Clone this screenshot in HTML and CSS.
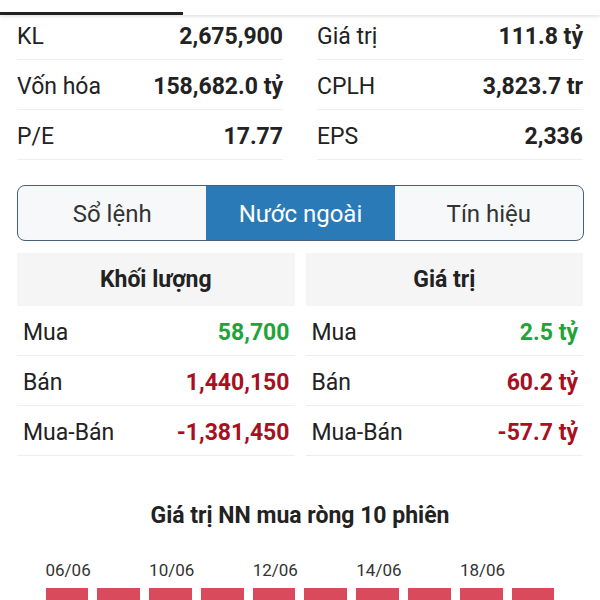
FILE: index.html
```html
<!DOCTYPE html>
<html lang="vi">
<head>
    <meta charset="UTF-8">
    <meta name="viewport" content="width=device-width, initial-scale=1.0">
    <title>Nước ngoài</title>
    <link rel="stylesheet" href="styles.css">
</head>
<body>
    <!-- Thanh tab phía trên (đang cuộn) -->
    <div class="topbar"><span class="indicator"></span></div>

    <!-- Thông số cơ bản -->
    <div class="stats">
        <div class="stat"><span>KL</span><b>2,675,900</b></div>
        <div class="stat"><span>Giá trị</span><b>111.8 tỷ</b></div>
        <div class="stat"><span>Vốn hóa</span><b>158,682.0 tỷ</b></div>
        <div class="stat"><span>CPLH</span><b>3,823.7 tr</b></div>
        <div class="stat"><span>P/E</span><b>17.77</b></div>
        <div class="stat"><span>EPS</span><b>2,336</b></div>
    </div>

    <div class="tabs">
        <div class="tab">Sổ lệnh</div>
        <div class="tab active">Nước ngoài</div>
        <div class="tab">Tín hiệu</div>
    </div>

    <!-- Giao dịch khối ngoại -->
    <div class="foreign">
        <div class="panel">
            <div class="panel-head">Khối lượng</div>
            <div class="panel-row"><span>Mua</span><b class="up">58,700</b></div>
            <div class="panel-row"><span>Bán</span><b class="down">1,440,150</b></div>
            <div class="panel-row"><span>Mua-Bán</span><b class="down">-1,381,450</b></div>
        </div>
        <div class="panel">
            <div class="panel-head">Giá trị</div>
            <div class="panel-row"><span>Mua</span><b class="up">2.5 tỷ</b></div>
            <div class="panel-row"><span>Bán</span><b class="down">60.2 tỷ</b></div>
            <div class="panel-row"><span>Mua-Bán</span><b class="down">-57.7 tỷ</b></div>
        </div>
    </div>

    <h2 class="chart-title">Giá trị NN mua ròng 10 phiên</h2>

    <div class="chart">
        <div class="chart-labels">
            <span>06/06</span><span></span>
            <span>10/06</span><span></span>
            <span>12/06</span><span></span>
            <span>14/06</span><span></span>
            <span>18/06</span><span></span>
        </div>
        <div class="chart-bars">
            <div class="bar"></div><div class="bar"></div>
            <div class="bar"></div><div class="bar"></div>
            <div class="bar"></div><div class="bar"></div>
            <div class="bar"></div><div class="bar"></div>
            <div class="bar"></div><div class="bar"></div>
        </div>
    </div>
</body>
</html>
```

FILE: styles.css
```css
body {
    margin: 0;
    background: #ffffff;
    color: #222222;
    font-family: Roboto, "Noto Sans", sans-serif;
    font-size: 23px;
    overflow: hidden;
}

.topbar {
    position: absolute;
    top: 0;
    left: 0;
    right: 0;
    height: 15px;
    background: #ffffff;
    box-shadow: 0 2px 3px rgba(0, 0, 0, 0.1);
    z-index: 2;
}

.indicator {
    position: absolute;
    left: 0;
    bottom: 0;
    width: 183px;
    height: 3px;
    background: #222222;
}

.stats {
    display: grid;
    grid-template-columns: 1fr 1fr;
    column-gap: 34px;
    padding: 10px 17px 0;
}

.stat {
    display: flex;
    justify-content: space-between;
    align-items: center;
    height: 50px;
    padding-top: 3px;
    box-sizing: border-box;
    border-bottom: 1px solid #eeeeee;
}

.stat b, .panel-row b {
    font-weight: 700;
}

.tabs {
    display: grid;
    grid-template-columns: 1fr 1fr 1fr;
    margin: 25px 16px 0 17px;
    height: 56px;
    box-sizing: border-box;
    border: 1px solid #45607a;
    border-radius: 8px;
    overflow: hidden;
    background: #f6f8f9;
}

.tab {
    display: flex;
    justify-content: center;
    align-items: center;
    padding-top: 2px;
    color: #333333;
    font-size: 24px;
}

.tab.active {
    background: #2a7ab7;
    color: #ffffff;
}

.foreign {
    display: grid;
    grid-template-columns: 1fr 1fr;
    column-gap: 11px;
    margin: 12px 17px 0;
}

.panel-head {
    height: 53px;
    display: flex;
    justify-content: center;
    align-items: center;
    background: #f5f5f5;
    font-weight: 700;
}

.panel-row {
    display: flex;
    justify-content: space-between;
    align-items: center;
    height: 50px;
    padding: 3px 5px 0 6px;
    box-sizing: border-box;
    border-bottom: 1px solid #eeeeee;
}

.up {
    color: #22a33a;
}

.down {
    color: #a80f1f;
}

.chart-title {
    margin: 46px 0 0;
    text-align: center;
    font-size: 23px;
    font-weight: 700;
}

.chart {
    width: 509px;
    margin: 31px auto 0;
}

.chart-labels, .chart-bars {
    display: grid;
    grid-template-columns: repeat(10, 1fr);
    column-gap: 9px;
}

.chart-labels span {
    white-space: nowrap;
    font-size: 17px;
    color: #333333;
}

.chart-bars {
    margin-top: 8px;
}

.bar {
    height: 40px;
    background: #d84a5c;
}
```
